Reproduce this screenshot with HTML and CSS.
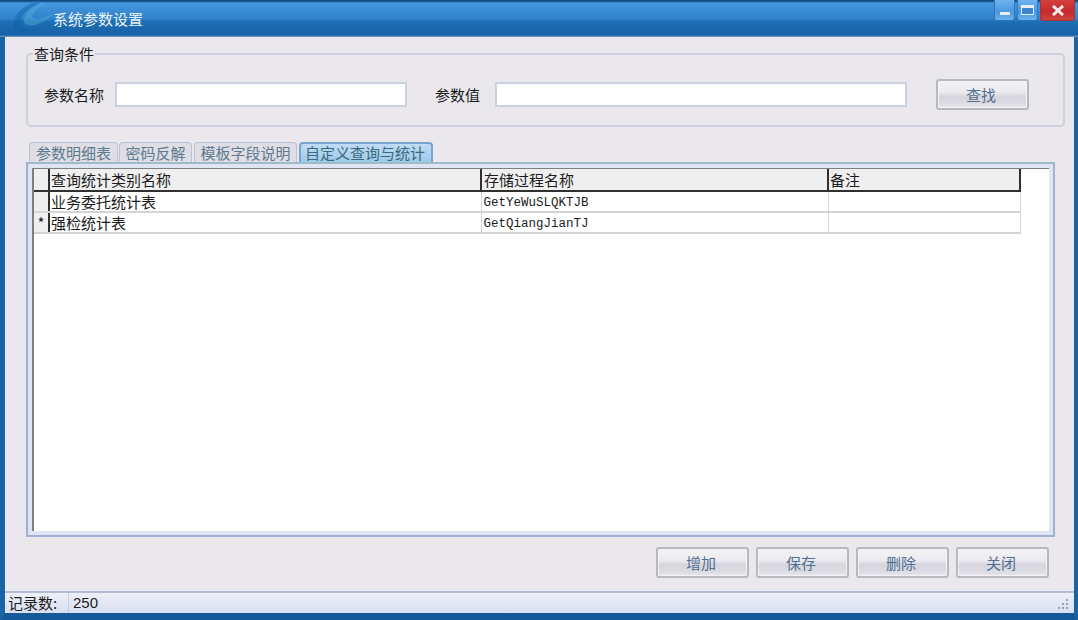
FILE: index.html
```html
<!DOCTYPE html>
<html lang="zh">
<head>
<meta charset="utf-8">
<title>系统参数设置</title>
<link rel="stylesheet" href="styles.css">
</head>
<body>
<div class="window">
  <header class="titlebar">
    <svg class="logo" width="54" height="36" viewBox="0 0 54 36" aria-hidden="true">
      <path d="M27 3C15 8 7 18 8 27c1 6 14 6 28 2-13 1-20-1-20-7C16 14 24 8 35 3z" fill="#0f5fa6" opacity=".45"/>
      <path d="M36 3C26 8 19 14 19 21c0 4 5 5 11 4 8-2 15-8 20-12-8 4-16 7-20 6-5-1-3-8 12-16z" fill="#4fb0d8" opacity=".45"/>
    </svg>
    <span class="title">系统参数设置</span>
    <div class="controls">
      <span class="ctl ctl-min"><i></i></span>
      <span class="ctl ctl-max"><i></i></span>
      <span class="ctl ctl-close">
        <svg width="14" height="11" viewBox="0 0 14 11" aria-hidden="true"><path d="M2 1l10 9M12 1L2 10" stroke="#f4ecec" stroke-width="3" fill="none"/></svg>
      </span>
    </div>
  </header>

  <main class="content">
    <fieldset class="query">
      <legend>查询条件</legend>
      <div class="query-row">
        <label class="lbl lbl-name">参数名称</label>
        <input class="field field-name" type="text">
        <label class="lbl lbl-value">参数值</label>
        <input class="field field-value" type="text">
        <button class="btn btn-find">查找</button>
      </div>
    </fieldset>

    <nav class="tabs">
      <span class="tab tab-a">参数明细表</span>
      <span class="tab tab-b">密码反解</span>
      <span class="tab tab-c">模板字段说明</span>
      <span class="tab tab-d active">自定义查询与统计</span>
    </nav>

    <section class="panel">
      <div class="grid">
        <table>
          <colgroup>
            <col class="c0"><col class="c1"><col class="c2"><col class="c3">
          </colgroup>
          <thead>
            <tr><th class="rh"></th><th>查询统计类别名称</th><th>存储过程名称</th><th>备注</th></tr>
          </thead>
          <tbody>
            <tr><td class="rh"></td><td>业务委托统计表</td><td class="code">GetYeWuSLQKTJB</td><td></td></tr>
            <tr><td class="rh">*</td><td>强检统计表</td><td class="code">GetQiangJianTJ</td><td></td></tr>
          </tbody>
        </table>
      </div>
    </section>

    <div class="actions">
      <button class="btn">增加</button>
      <button class="btn">保存</button>
      <button class="btn">删除</button>
      <button class="btn">关闭</button>
    </div>
  </main>

  <footer class="status">
    <span class="status-label">记录数:</span>
    <span class="status-value">250</span>
    <svg class="grip" width="14" height="14" viewBox="0 0 14 14" aria-hidden="true">
      <path d="M10 2h2v2h-2zM6 6h2v2H6zM10 6h2v2h-2zM2 10h2v2H2zM6 10h2v2H6zM10 10h2v2h-2z" fill="#9aa3b5"/>
    </svg>
  </footer>
</div>
</body>
</html>
```
FILE: styles.css
```css
* { box-sizing: border-box; }
html, body { margin: 0; padding: 0; }
body {
  width: 1078px;
  height: 620px;
  overflow: hidden;
  font-family: "Noto Sans CJK SC", "Liberation Sans", sans-serif;
  font-size: 15px;
  color: #1c1c1c;
}
.window {
  width: 1078px;
  height: 620px;
  display: flex;
  flex-direction: column;
  background: #eae8ed;
  border-left: 5px solid #1a64a6;
  border-right: 4px solid #1a64a6;
  border-bottom: 7px solid #155a98;
}
.titlebar {
  position: relative;
  height: 37px;
  margin: 0 -4px 0 -5px;
  padding-left: 53px;
  display: flex;
  align-items: flex-start;
  flex: none;
  color: #eaf3fa;
  background: linear-gradient(#0f4a80 0, #0f4a80 1px, #4596de 3px, #2f83cb 19px, #1f6fb4 21px, #1561a8 35px, #7e9fc0 37px);
}
.logo { position: absolute; left: 5px; top: 0; }
.title { font-size: 15px; line-height: 20px; margin-top: 9px; position: relative; }
.controls {
  margin-left: auto;
  margin-right: 3px;
  display: flex;
  gap: 2px;
  height: 21px;
}
.ctl {
  width: 21px;
  height: 21px;
  display: flex;
  align-items: center;
  justify-content: center;
  border: 1px solid #2c75b8;
  border-top: 0;
  border-radius: 0 0 3px 3px;
  background: linear-gradient(#6db2ee, #4a98e2 60%, #6cb0ec);
}
.ctl-min i { display: block; width: 10px; height: 3px; margin-top: 6px; background: #e6edf4; }
.ctl-max i { display: block; width: 13px; height: 10px; border: 1px solid #e6edf4; border-top-width: 3px; background: #3a86cf; }
.ctl-close {
  width: 35px;
  border-color: #a83434;
  background: linear-gradient(#d3403c, #c42a2b 60%, #cf4540);
}
.content {
  flex: 1;
  min-height: 0;
  display: flex;
  flex-direction: column;
  padding: 0 9px 0 21px;
}
.query {
  margin: 8px 0 0;
  padding: 0;
  height: 82px;
  border: 2px solid #cdd1dd;
  border-radius: 5px;
  min-width: 0;
}
.query legend {
  margin-left: 5px;
  padding: 0 1px;
  font-size: 15px;
  line-height: 18px;
}
.query-row {
  display: flex;
  align-items: center;
  height: 33px;
  margin-top: 15px;
}
.lbl { font-size: 15px; line-height: 20px; white-space: nowrap; }
.lbl-name { margin-left: 16px; width: 71px; }
.lbl-value { margin-left: 28px; width: 60px; }
.field {
  height: 25px;
  border: 2px solid #c9d1e1;
  background: #fff;
  padding: 0;
  outline: 0;
}
.field-name { width: 292px; }
.field-value { width: 412px; }
.btn {
  width: 93px;
  height: 31px;
  padding: 0 3px 0 0;
  border: 2px solid #b8b8bd;
  border-radius: 3px;
  color: #4f6f92;
  font-family: inherit;
  font-size: 15px;
  background: linear-gradient(#f3f2f5 0, #eceaee 42%, #d6d5dd 58%, #dddce3 85%, #eceaef 100%);
  box-shadow: inset 0 0 0 1px #f2f1f4;
}
.btn-find { margin-left: 29px; }
.tabs {
  display: flex;
  align-items: flex-end;
  height: 20px;
  margin-top: 15px;
  padding-left: 3px;
  gap: 1px;
}
.tab {
  height: 20px;
  line-height: 19px;
  text-align: center;
  font-size: 15px;
  color: #5c7a90;
  background: #dfdee4;
  border: 1px solid #b9c3d3;
  border-bottom: 0;
  border-radius: 4px 4px 0 0;
  white-space: nowrap;
}
.tab-a { width: 89px; }
.tab-b { width: 73px; }
.tab-c { width: 103px; margin-left: 1px; }
.tab-d { width: 134px; margin-left: 1px; }
.tab.active {
  color: #3a6a7c;
  background: linear-gradient(#c0dcf3, #9ec9ea);
  border: 2px solid #7ba3cb;
  border-bottom: 0;
  line-height: 18px;
  padding-right: 2px;
}
.panel {
  width: 1029px;
  height: 375px;
  flex: none;
  padding: 4px;
  border: 2px solid #9eb0d4;
  border-top-color: #9dbcc8;
  background: #dfe5f3;
}
.grid {
  height: 100%;
  background: #fff;
  border-left: 2px solid #7f7f7f;
  border-top: 1px solid #7f7f7f;
  overflow: hidden;
}
table {
  border-collapse: collapse;
  table-layout: fixed;
  width: 986px;
}
.c0 { width: 15px; }
.c1 { width: 432px; }
.c2 { width: 347px; }
.c3 { width: 192px; }
th, td {
  height: 21px;
  padding: 0 0 0 1px;
  font-weight: 400;
  font-size: 15px;
  line-height: 18px;
  text-align: left;
  white-space: nowrap;
  overflow: hidden;
}
th {
  height: 22px;
  background: #efeff0;
  border-right: 2px solid #303030;
  border-bottom: 2px solid #303030;
}
th:nth-child(3) { padding-left: 2px; }
td {
  border-right: 1px solid #d4d4d4;
  border-bottom: 2px solid #d4d4d4;
  background: #fff;
}
td.rh {
  background: #efeff0;
  border-right: 2px solid #303030;
  text-align: center;
  padding: 0;
}
th.rh { padding: 0; }
td.code {
  font-family: "Liberation Mono", monospace;
  font-size: 12.5px;
  line-height: 16px;
  padding: 2px 0 0 2px;
}
.actions {
  display: flex;
  justify-content: flex-end;
  gap: 7px;
  margin-top: 10px;
  padding-right: 16px;
}
.status {
  flex: none;
  height: 22px;
  margin-top: auto;
  display: flex;
  align-items: center;
  border-top: 2px solid #b3bcd0;
  background: linear-gradient(#eef0f8, #d9dff0);
  font-size: 15px;
}
.status-label { width: 63px; padding-left: 3px; line-height: 20px; }
.status-value {
  padding-left: 4px;
  border-left: 1px solid #c8cfe0;
  font-family: "Liberation Sans", sans-serif;
  font-size: 15px;
  line-height: 20px;
  height: 20px;
}
.grip { margin-left: auto; margin-right: 4px; margin-top: 2px; }
```
